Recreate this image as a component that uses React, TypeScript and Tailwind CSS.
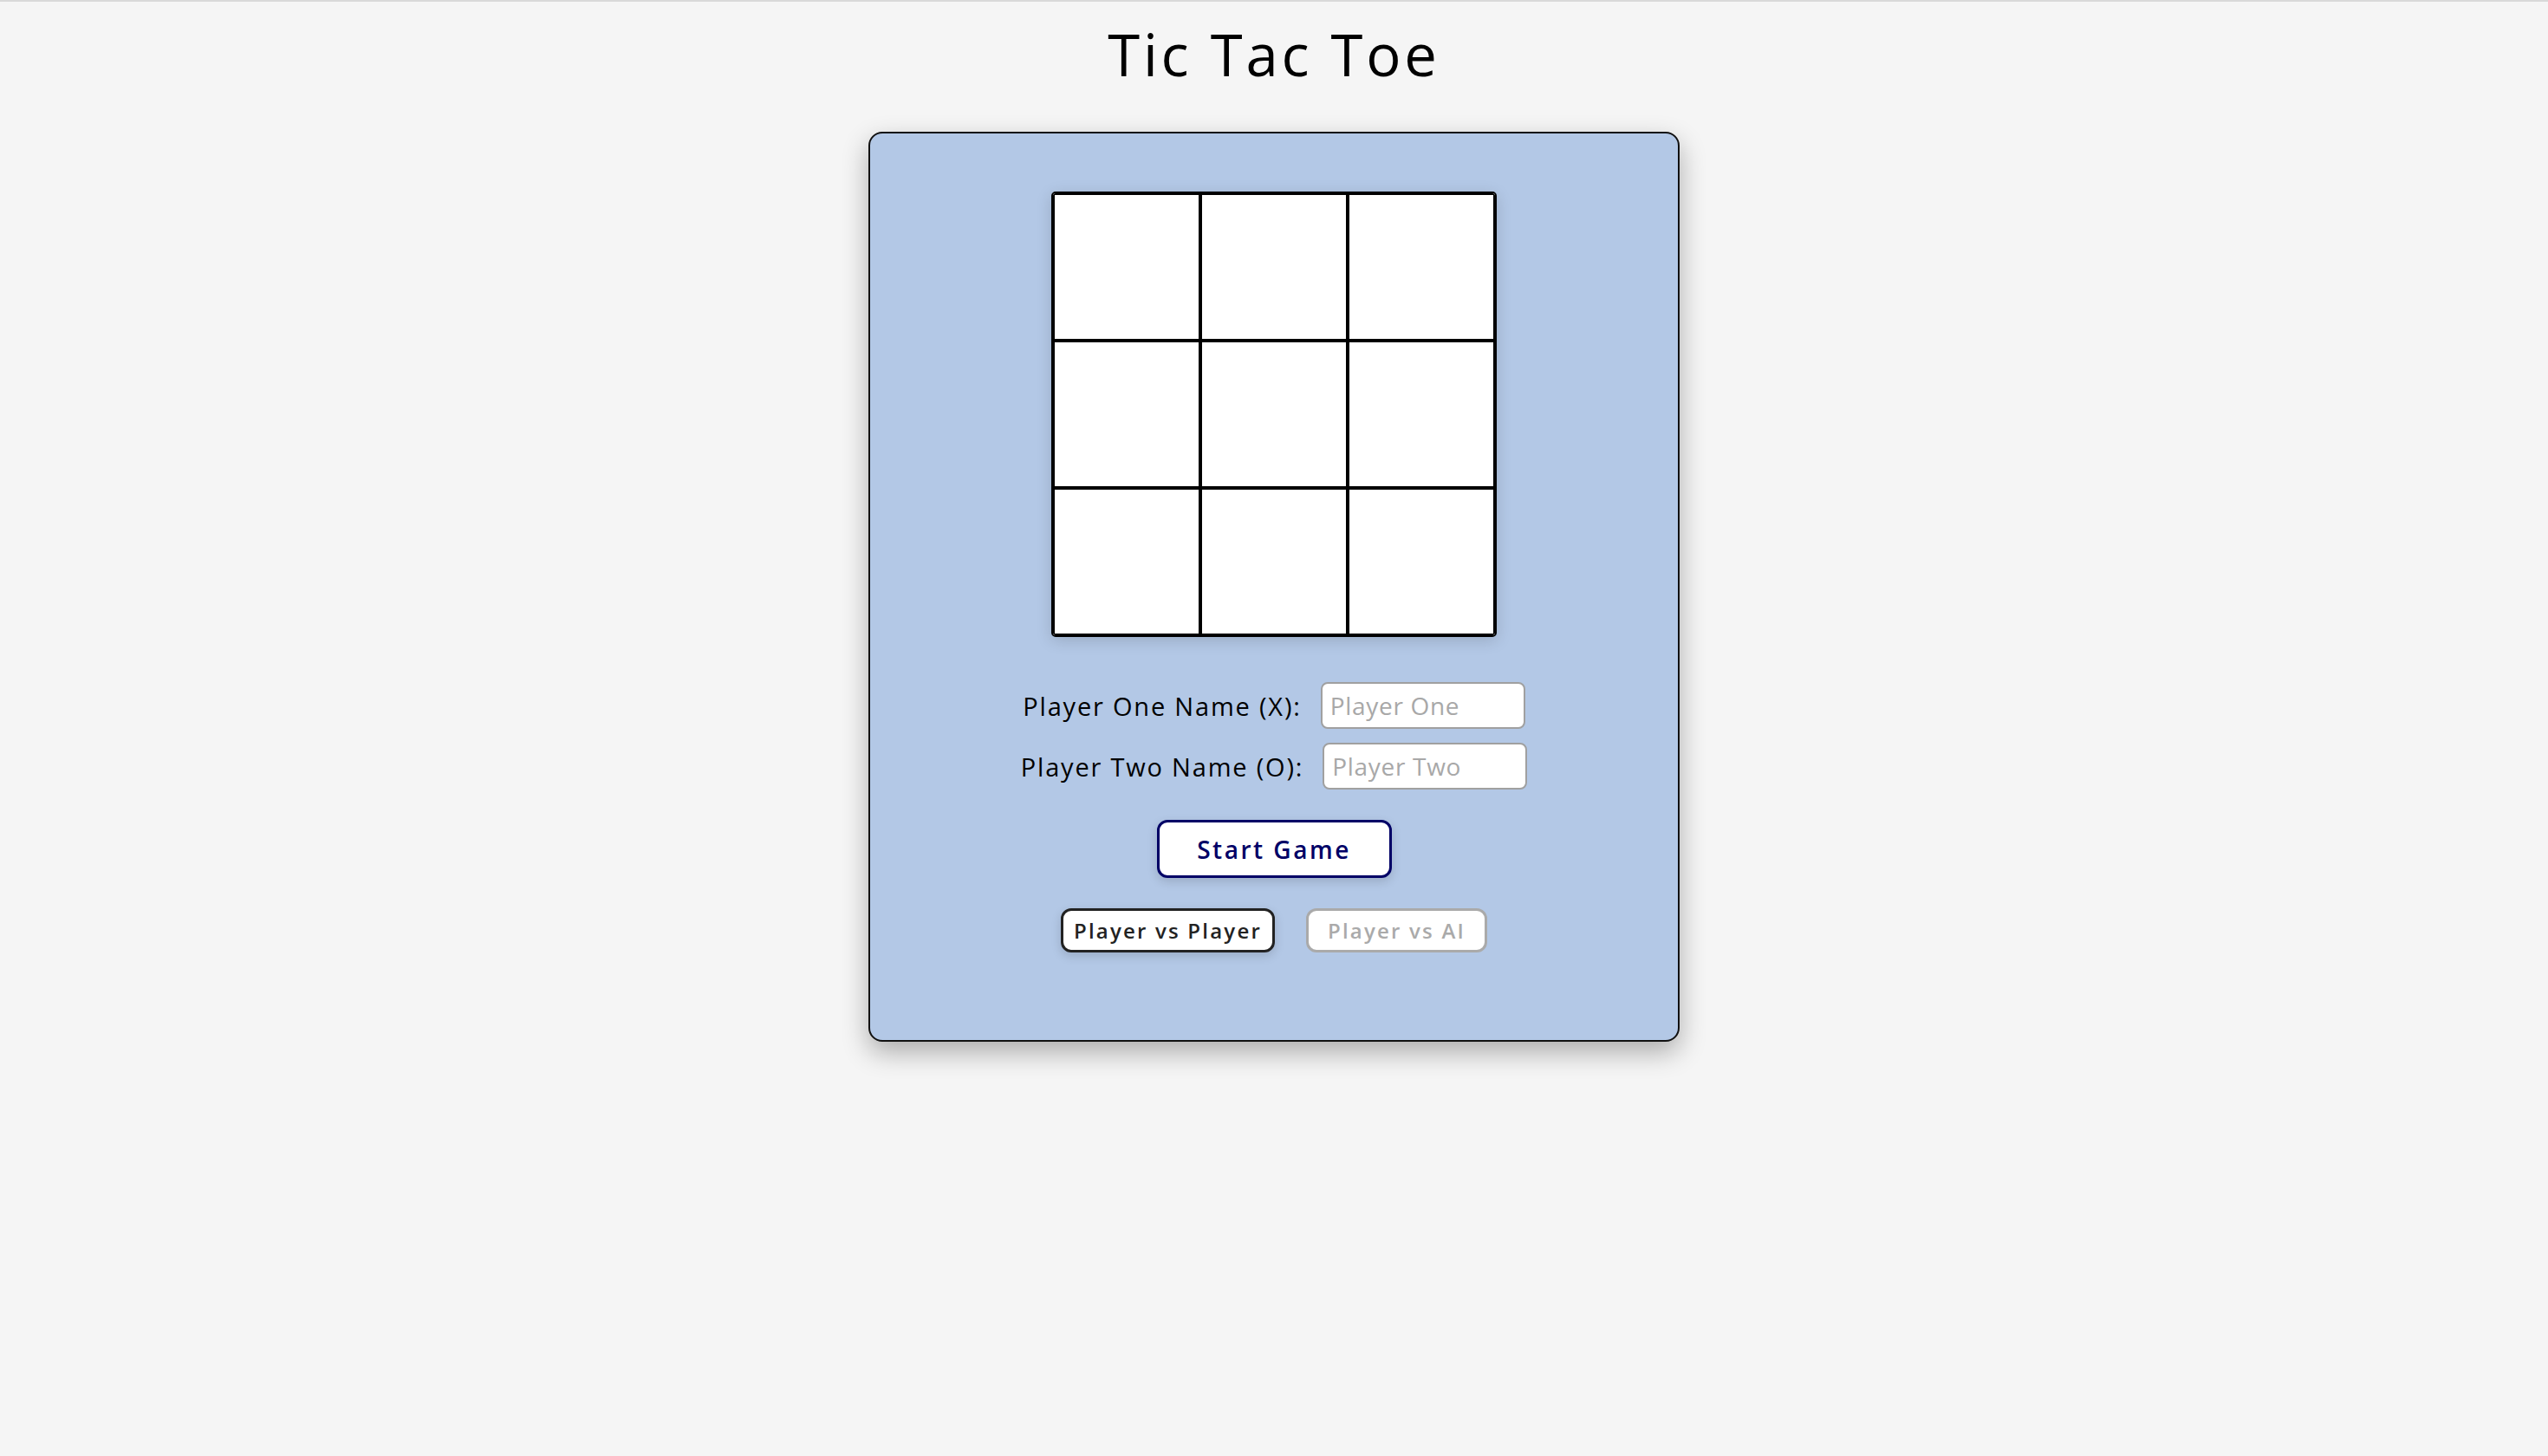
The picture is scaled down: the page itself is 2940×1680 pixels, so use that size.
import React from "react";

export default function App() {
  const cells = Array.from({ length: 9 });
  return (
    <div className="min-h-screen bg-[#f5f5f5] border-t-2 border-[#d9d9d9] font-['Open_Sans',sans-serif] text-black">
      <h1 className="text-center text-[67px] leading-none font-normal tracking-[3.8px] pt-[27px]">Tic Tac Toe</h1>
      <div className="mx-auto mt-[56px] w-[936px] rounded-[16px] border-2 border-[#111] bg-[#b3c8e6] pt-[67px] pb-[101px] shadow-[0_12px_30px_rgba(0,0,0,0.3)] flex flex-col items-center">
        <div className="grid grid-cols-3 overflow-hidden rounded-[5px] border-2 border-black bg-white shadow-[0_4px_18px_rgba(0,0,0,0.15)]">
          {cells.map((_, i) => (
            <div key={i} className="h-[170px] w-[170px] border-2 border-black bg-white" />
          ))}
        </div>

        <div className="mt-[52px] flex flex-col items-center gap-[16px]">
          <div className="flex items-center gap-[22px]">
            <label className="text-[29px] leading-none tracking-[1.8px]">Player One Name (X):</label>
            <input
              type="text"
              placeholder="Player One"
              className="h-[54px] w-[236px] rounded-[8px] border-2 border-[#a0a0a0] bg-white px-[9px] text-[28px] tracking-[0.7px] outline-none placeholder:text-[#a8a8a8]"
            />
          </div>
          <div className="flex items-center gap-[22px]">
            <label className="text-[29px] leading-none tracking-[1.8px]">Player Two Name (O):</label>
            <input
              type="text"
              placeholder="Player Two"
              className="h-[54px] w-[236px] rounded-[8px] border-2 border-[#a0a0a0] bg-white px-[9px] text-[28px] tracking-[0.7px] outline-none placeholder:text-[#a8a8a8]"
            />
          </div>
        </div>

        <button className="mt-[35px] flex h-[67px] w-[271px] items-center justify-center rounded-[12px] border-[3px] border-[#000066] bg-white text-[28px] font-semibold tracking-[2.5px] text-[#000066] shadow-[0_4px_12px_rgba(0,0,0,0.15)]">
          Start Game
        </button>

        <div className="mt-[35px] flex items-center gap-[36px]">
          <button className="flex h-[51px] w-[247px] items-center justify-center rounded-[12px] border-[3px] border-[#222] bg-white text-[24px] font-semibold tracking-[2.2px] text-[#222] shadow-[0_4px_12px_rgba(0,0,0,0.15)]">
            Player vs Player
          </button>
          <button className="flex h-[51px] w-[209px] items-center justify-center rounded-[12px] border-[3px] border-[#aaaaaa] bg-white text-[24px] font-semibold tracking-[2.2px] text-[#aaaaaa]">
            Player vs AI
          </button>
        </div>
      </div>
    </div>
  );
}
